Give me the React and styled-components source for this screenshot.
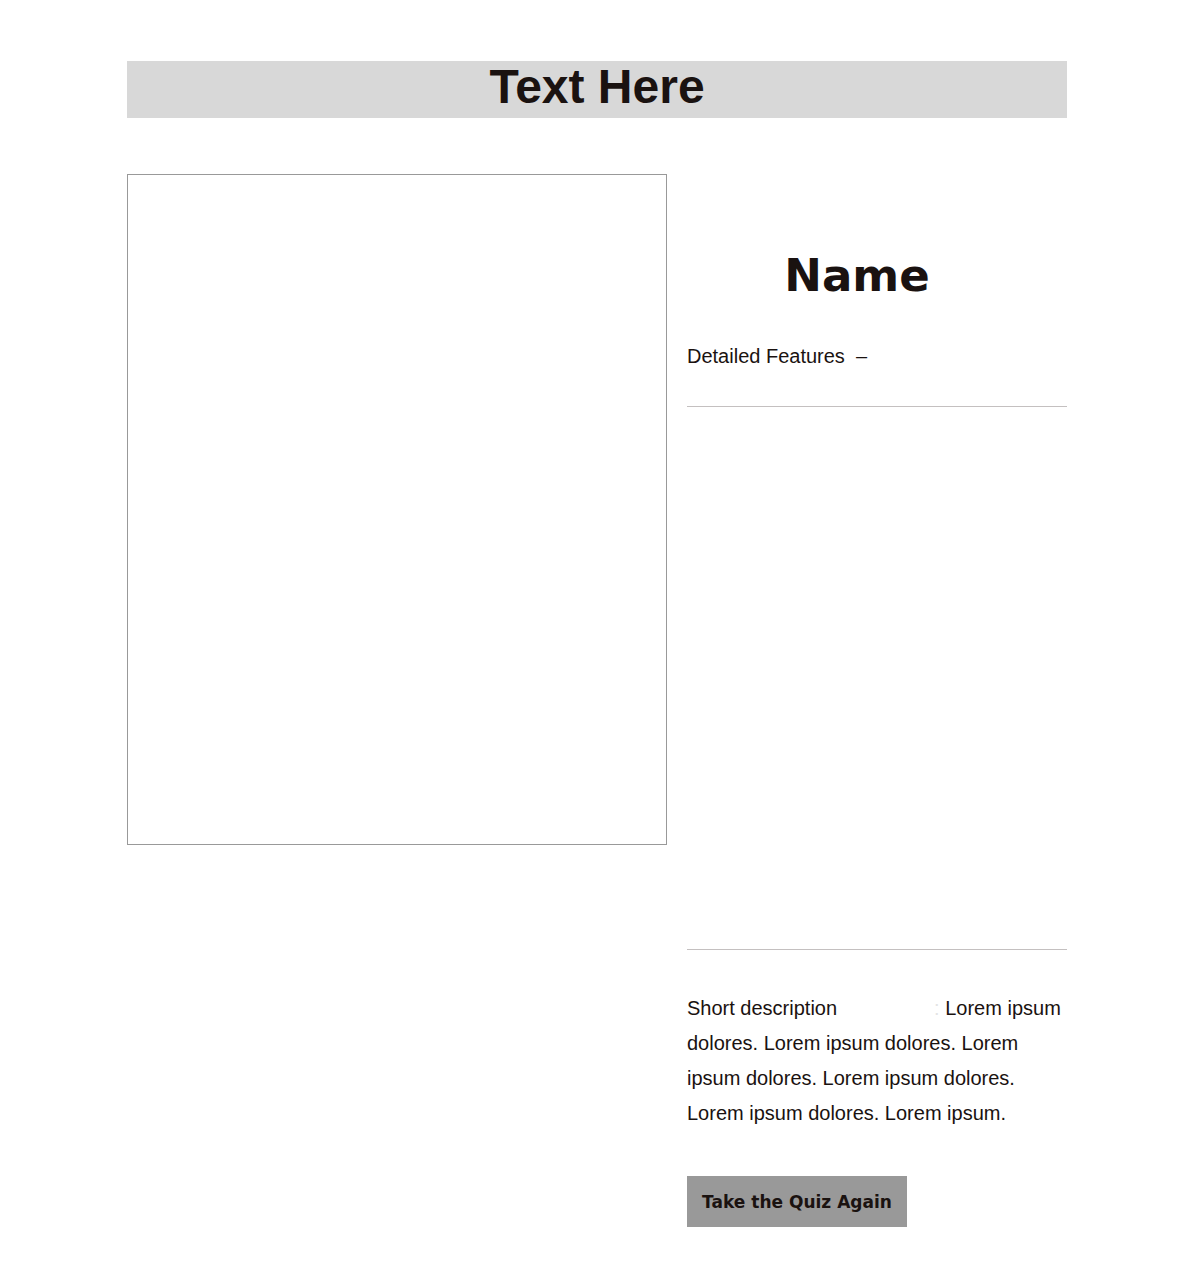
import React from "react";
import styled, { createGlobalStyle } from "styled-components";

const Global = createGlobalStyle`
  html, body { margin: 0; padding: 0; background: #ffffff; }
  body { font-family: "Liberation Sans", Arial, sans-serif; color: #1a1210; }
`;

const Page = styled.div`
  width: 940px;
  margin: 0 auto;
  padding: 61px 0 40px;
`;

const Banner = styled.header`
  height: 57px;
  background: #d8d8d8;
  display: flex;
  align-items: center;
  justify-content: center;
`;

const BannerTitle = styled.h1`
  margin: 0;
  font-family: "Liberation Sans", Arial, sans-serif;
  font-weight: 700;
  font-size: 48px;
  line-height: 1;
  color: #1a1210;
  position: relative;
  top: -3px;
`;

const Main = styled.main`
  display: grid;
  grid-template-columns: 540px 380px;
  column-gap: 20px;
  margin-top: 56px;
`;

const ImageFrame = styled.div`
  box-sizing: border-box;
  height: 671px;
  border: 1px solid #999999;
  background: #ffffff;
`;

const Details = styled.section`
  display: flex;
  flex-direction: column;
`;

const NameRow = styled.div`
  display: flex;
  justify-content: center;
  padding: 72px 40px 0 0;
  height: 60px;
`;

const Name = styled.h2`
  margin: 0;
  font-family: "DejaVu Sans", Verdana, sans-serif;
  font-weight: 700;
  font-size: 45px;
  line-height: 60px;
  color: #1a1210;
`;

const Features = styled.div`
  margin-top: 35px;
  font-size: 20px;
  line-height: 30px;
  color: #1a1210;
`;

const Divider = styled.hr`
  margin: ${(p) => p.$top}px 0 0;
  border: none;
  border-top: 1px solid #c4c0c0;
  width: 100%;
`;

const Spacer = styled.div`
  height: 542px;
`;

const Description = styled.p`
  margin: 41px 0 0;
  font-size: 20px;
  line-height: 35px;
  color: #1a1210;
`;

const Label = styled.span`
  margin-right: 97px;
`;

const FaintColon = styled.span`
  color: #e4e4e4;
`;

const QuizButton = styled.button`
  align-self: flex-start;
  margin-top: 45px;
  width: 220px;
  height: 51px;
  border: none;
  background: #999999;
  color: #1a1210;
  font-family: "DejaVu Sans", Verdana, sans-serif;
  font-weight: 700;
  font-size: 17px;
  cursor: pointer;
  padding: 0;
`;

export default function App() {
  return (
    <>
      <Global />
      <Page>
        <Banner>
          <BannerTitle>Text Here</BannerTitle>
        </Banner>
        <Main>
          <ImageFrame />
          <Details>
            <NameRow>
              <Name>Name</Name>
            </NameRow>
            <Features>Detailed Features &nbsp;–</Features>
            <Divider $top={35} />
            <Spacer />
            <Divider $top={0} />
            <Description>
              <Label>Short description</Label><FaintColon>:</FaintColon> Lorem ipsum dolores. Lorem ipsum dolores. Lorem
              ipsum dolores. Lorem ipsum dolores. Lorem ipsum dolores. Lorem ipsum.
            </Description>
            <QuizButton>Take the Quiz Again</QuizButton>
          </Details>
        </Main>
      </Page>
    </>
  );
}
